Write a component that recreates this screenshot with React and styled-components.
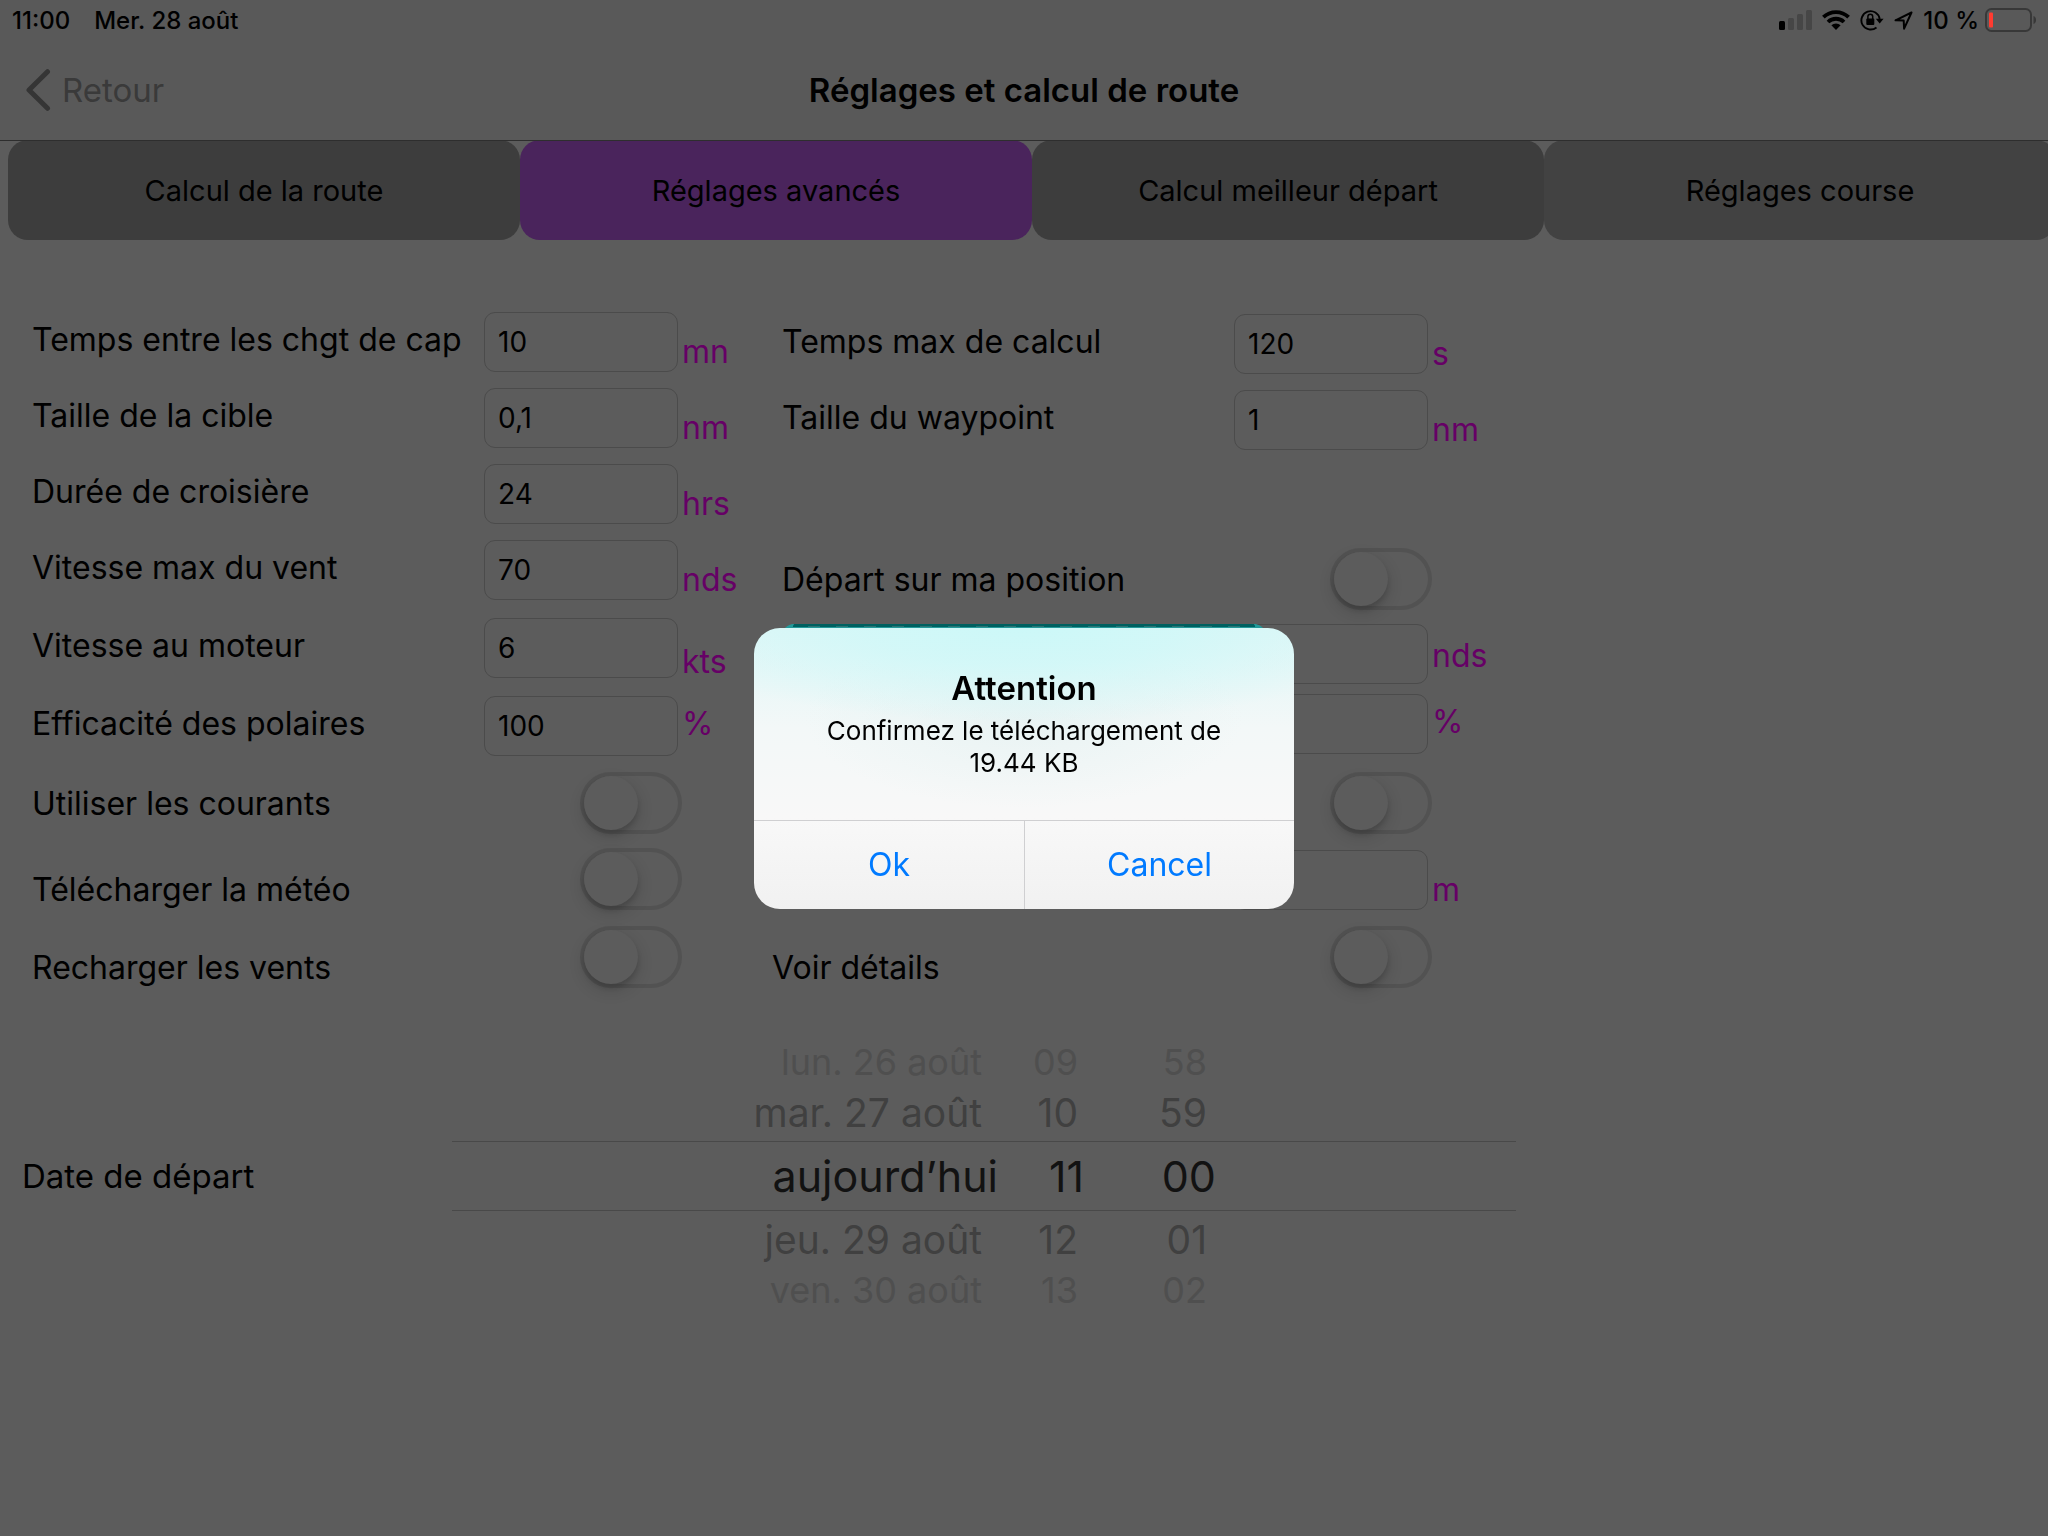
import React from "react";
import styled, { createGlobalStyle, css } from "styled-components";

const Global = createGlobalStyle`
  *, *::before, *::after { box-sizing: border-box; }
  body { margin: 0; background: #5c5c5c; color: #000; font-family: Inter, "Liberation Sans", sans-serif; }
  button, input { font: inherit; color: inherit; }
  button { padding: 0; border: 0; background: none; }
  svg { display: block; }
`;

const Page = styled.div`
  min-height: 100vh;
  overflow: hidden;
`;

const TopBar = styled.header`
  position: relative;
  z-index: 1;
  height: 141px;
  background: #595959;
  border-bottom: 1px solid #2e2e2e;
`;

const StatusBar = styled.div`
  display: flex;
  align-items: center;
  justify-content: space-between;
  height: 40px;
  padding: 0 12px;
  font-size: 24px;
  font-weight: 500;
`;

const StatusGroup = styled.div`
  display: flex;
  align-items: center;
  gap: ${(p) => p.$gap}px;
`;

const NavBar = styled.nav`
  display: grid;
  grid-template-columns: 1fr auto 1fr;
  align-items: center;
  height: 100px;
  padding: 0 26px;
`;

const BackButton = styled.button`
  display: flex;
  align-items: center;
  gap: 10px;
  justify-self: start;
  font-size: 33px;
  color: #3a3a3a;
`;

const Title = styled.h1`
  margin: 0;
  font-size: 33px;
  font-weight: 600;
`;

const Tabs = styled.div`
  display: grid;
  grid-template-columns: repeat(4, 25%);
  width: 100%;
  margin: -1px 0 0 8px;
`;

const Tab = styled.button`
  height: 100px;
  border-radius: 20px;
  font-size: 29px;
  background: ${(p) => p.$tone};
`;

const Form = styled.form`
  padding: 72px 0 0;
`;

const Columns = styled.div`
  display: grid;
  grid-template-columns: 750px 750px;
  align-items: start;
`;

const Column = styled.div`
  display: flex;
  flex-direction: column;
  padding-top: ${(p) => (p.$lowered ? 2 : 0)}px;
`;

const Row = styled.div`
  display: grid;
  grid-template-columns: ${(p) => (p.$wide ? 462 : 452)}px 194px 1fr;
  align-items: start;
  height: ${(p) => p.$height}px;
  margin-left: ${(p) => (p.$wide ? 22 : 32)}px;
  font-size: 32px;
  line-height: 40px;
  white-space: nowrap;
`;

const Label = styled.label`
  padding-top: ${(p) => p.$drop}px;
`;

const Unit = styled.span`
  grid-column: 3;
  padding: ${(p) => p.$drop}px 0 0 4px;
  color: #660066;
`;

const Field = styled.input`
  grid-column: 2;
  width: 194px;
  height: 60px;
  padding: 0 13px;
  border: 1px solid #4b4b4b;
  border-radius: 11px;
  background: transparent;
  font-size: 28px;
  outline: none;
`;

const Switch = styled.input`
  grid-column: 2;
  appearance: none;
  justify-self: end;
  display: flex;
  width: 102px;
  height: 62px;
  margin: 0 -4px 0 0;
  padding: 4px;
  border-radius: 31px;
  box-shadow: inset 0 0 0 4px #525252;
  &::before {
    content: "";
    width: 54px;
    height: 54px;
    border-radius: 50%;
    background: #5c5c5c;
    box-shadow: 0 6px 16px rgba(0, 0, 0, 0.16), 0 4px 5px rgba(0, 0, 0, 0.12);
  }
`;

const TealButton = styled.button`
  position: relative;
  z-index: 1;
  height: 60px;
  margin: 0 -32px 0 10px;
  border: solid #239a9a;
  border-width: 0 10px;
  border-radius: 12px;
  background:
    repeating-linear-gradient(90deg, transparent 0 16px, #2b7373 16px 28px) 0 2px / 100% 1px no-repeat padding-box,
    linear-gradient(#006060, #006060) 0 0 / 100% 3px no-repeat padding-box,
    #239a9a;
`;

const DateRow = styled.div`
  display: grid;
  grid-template-columns: 430px 1064px;
  align-items: center;
  margin-left: 22px;
  padding-top: 38px;
`;

const DateLabel = styled.span`
  font-size: 33px;
`;

const wheelTiers = {
  far: css`height: 44px; font-size: 36px; color: #4f4f4f;`,
  near: css`height: 57px; font-size: 39px; color: #404040;`,
  current: css`
    height: 70px;
    font-size: 43px;
    color: #121212;
    border: 1px solid #494949;
    border-width: 1px 0;
    grid-template-columns: 546px 86px 132px;
  `,
};

const WheelRow = styled.div`
  display: grid;
  grid-template-columns: 530px 96px 129px;
  align-items: center;
  text-align: right;
  white-space: nowrap;
  overflow: hidden;
  ${(p) => wheelTiers[p.$tier]}
`;

const Backdrop = styled.div`
  position: fixed;
  inset: 0;
  z-index: 2;
  display: flex;
  align-items: center;
  justify-content: center;
`;

const Dialog = styled.section`
  width: 540px;
  border-radius: 26px;
  overflow: hidden;
  text-align: center;
  background:
    radial-gradient(380px 95px at 50% 0, #ccf8f8 0, rgba(208, 248, 248, 0.85) 40%, rgba(225, 247, 247, 0) 100%),
    radial-gradient(220px 90px at 50% 90px, rgba(230, 242, 242, 0.8), rgba(240, 244, 244, 0)),
    linear-gradient(#e0f6f6 0, #f3f8f8 100px, #f8f8f8 190px, #f1f1f1 100%);
`;

const DialogText = styled.div`
  height: 192px;
  padding: 39px 60px 0;
`;

const DialogTitle = styled.h2`
  margin: 0;
  font-size: 33px;
  font-weight: 600;
  line-height: 42px;
`;

const DialogMessage = styled.p`
  margin: 6px 0 0;
  font-size: 26px;
  line-height: 32px;
`;

const Actions = styled.div`
  display: grid;
  grid-template-columns: 1fr 1fr;
  border-top: 1px solid #cfcfd1;
`;

const Action = styled.button`
  height: 88px;
  font-size: 32px;
  color: #007aff;
  & + & { border-left: 1px solid #cfcfd1; }
`;

const Chevron = () => (
  <svg width="26" height="42" viewBox="0 0 26 42" fill="none" stroke="#353535" strokeWidth="5" strokeLinecap="round" strokeLinejoin="round" aria-hidden="true">
    <path d="M21.500 2.700L3 21l18.500 18.300" />
  </svg>
);

const SignalIcon = () => (
  <svg width="33" height="20" viewBox="0 0 33 20" aria-hidden="true">
    <rect x="0" y="11" width="6" height="9" rx="1.500" />
    <rect x="9" y="8" width="6" height="12" rx="1.500" fill="#464646" />
    <rect x="18" y="4" width="6" height="16" rx="1.500" fill="#464646" />
    <rect x="27" y="0" width="6" height="20" rx="1.500" fill="#464646" />
  </svg>
);

const WifiIcon = () => (
  <svg width="28" height="20" viewBox="0 0 28 20" fill="none" stroke="#000" strokeWidth="3.800" aria-hidden="true">
    <path d="M1.400 7.200A18 18 0 0 1 26.600 7.200" />
    <path d="M6 12A11.500 11.500 0 0 1 22 12" />
    <path d="M14 20l-4.600-4.700a6.600 6.600 0 0 1 9.200 0z" fill="#000" stroke="none" />
  </svg>
);

const LockIcon = () => (
  <svg width="24" height="22" viewBox="0 0 24 22" fill="none" stroke="#000" aria-hidden="true">
    <path d="M16.500 18.400A9.200 9.200 0 1 1 19.700 10" strokeWidth="1.900" />
    <path d="M15.800 9.800h7.800l-3.900 4.600z" fill="#000" stroke="none" />
    <rect x="6.300" y="9.500" width="8" height="6.500" rx="1" fill="#000" stroke="none" />
    <path d="M7.900 10V7.600a2.400 2.400 0 0 1 4.800 0V10" strokeWidth="1.500" />
  </svg>
);

const LocationIcon = () => (
  <svg width="19" height="19" viewBox="0 0 19 19" fill="none" stroke="#000" strokeWidth="2" strokeLinejoin="round" aria-hidden="true">
    <path d="M17.500 1.500L1.500 9.300l8.200.200.400 8.200z" />
  </svg>
);

const BatteryIcon = () => (
  <svg width="51" height="24" viewBox="0 0 51 24" aria-hidden="true">
    <rect x="1" y="1" width="45" height="22" rx="5.500" fill="none" stroke="#383838" strokeWidth="2" />
    <rect x="4" y="4.500" width="4" height="15" rx="1" fill="#ff3b30" />
    <path d="M48.500 8c3.400 1 3.400 7 0 8z" fill="#383838" />
  </svg>
);

const Setting = ({ id, label, name, height = 76, drop = 8, value = "", unit, unitDrop = 20, toggle, wide, children }) => (
  <Row $height={height} $wide={wide}>
    {label && <Label htmlFor={id} $drop={drop}>{label}</Label>}
    {children}
    {toggle
      ? <Switch id={id} type="checkbox" aria-label={name} />
      : <Field id={id} type="text" defaultValue={value} aria-label={name} />}
    {unit && <Unit $drop={unitDrop}>{unit}</Unit>}
  </Row>
);

const wheel = [
  ["far", "lun. 26 août", "09", "58"],
  ["near", "mar. 27 août", "10", "59"],
  ["current", "aujourd’hui", "11", "00"],
  ["near", "jeu. 29 août", "12", "01"],
  ["far", "ven. 30 août", "13", "02"],
];

export default function App() {
  return (
    <>
      <Global />
      <Page>
        <TopBar>
          <StatusBar>
            <StatusGroup $gap={24}>
              <span>11:00</span>
              <span>Mer. 28 août</span>
            </StatusGroup>
            <StatusGroup $gap={10}>
              <SignalIcon />
              <WifiIcon />
              <LockIcon />
              <LocationIcon />
              <StatusGroup $gap={6}>
                <span>10 %</span>
                <BatteryIcon />
              </StatusGroup>
            </StatusGroup>
          </StatusBar>
          <NavBar>
            <BackButton type="button"><Chevron />Retour</BackButton>
            <Title>Réglages et calcul de route</Title>
          </NavBar>
        </TopBar>
        <Tabs>
          <Tab type="button" $tone="#3d3d3d">Calcul de la route</Tab>
          <Tab type="button" $tone="#4a245c">Réglages avancés</Tab>
          <Tab type="button" $tone="#3d3d3d">Calcul meilleur départ</Tab>
          <Tab type="button" $tone="#424242">Réglages course</Tab>
        </Tabs>
        <Form>
          <Columns>
            <Column>
              <Setting id="heading" label="Temps entre les chgt de cap" value="10" unit="mn" />
              <Setting id="target" label="Taille de la cible" value="0,1" unit="nm" />
              <Setting id="cruise" label="Durée de croisière" value="24" unit="hrs" />
              <Setting id="wind" label="Vitesse max du vent" value="70" unit="nds" height={78} />
              <Setting id="motor" label="Vitesse au moteur" value="6" unit="kts" unitDrop={24} height={78} />
              <Setting id="polar" label="Efficacité des polaires" value="100" unit="%" unitDrop={8} />
              <Setting id="currents" label="Utiliser les courants" toggle drop={12} />
              <Setting id="weather" label="Télécharger la météo" toggle drop={22} height={78} />
              <Setting id="reload" label="Recharger les vents" toggle drop={22} />
            </Column>
            <Column $lowered>
              <Setting id="time" label="Temps max de calcul" value="120" unit="s" />
              <Setting id="waypoint" label="Taille du waypoint" value="1" unit="nm" height={158} />
              <Setting id="position" label="Départ sur ma position" toggle drop={12} />
              <Setting id="speed" name="nds" unit="nds" unitDrop={12} height={70} wide>
                <TealButton type="button" aria-label="nds" />
              </Setting>
              <Setting id="percent" name="%" unit="%" unitDrop={8} height={78} wide />
              <Setting id="option" name="option" toggle height={78} wide />
              <Setting id="metres" name="m" unit="m" wide />
              <Setting id="details" label="Voir détails" toggle drop={22} wide />
            </Column>
          </Columns>
          <DateRow>
            <DateLabel>Date de départ</DateLabel>
            <div>
              {wheel.map(([tier, day, hour, minute]) => (
                <WheelRow key={day} $tier={tier}>
                  <span>{day}</span>
                  <span>{hour}</span>
                  <span>{minute}</span>
                </WheelRow>
              ))}
            </div>
          </DateRow>
        </Form>
      </Page>
      <Backdrop>
        <Dialog role="alertdialog" aria-labelledby="alert-title">
          <DialogText>
            <DialogTitle id="alert-title">Attention</DialogTitle>
            <DialogMessage>Confirmez le téléchargement de 19.44 KB</DialogMessage>
          </DialogText>
          <Actions>
            <Action type="button">Ok</Action>
            <Action type="button">Cancel</Action>
          </Actions>
        </Dialog>
      </Backdrop>
    </>
  );
}
